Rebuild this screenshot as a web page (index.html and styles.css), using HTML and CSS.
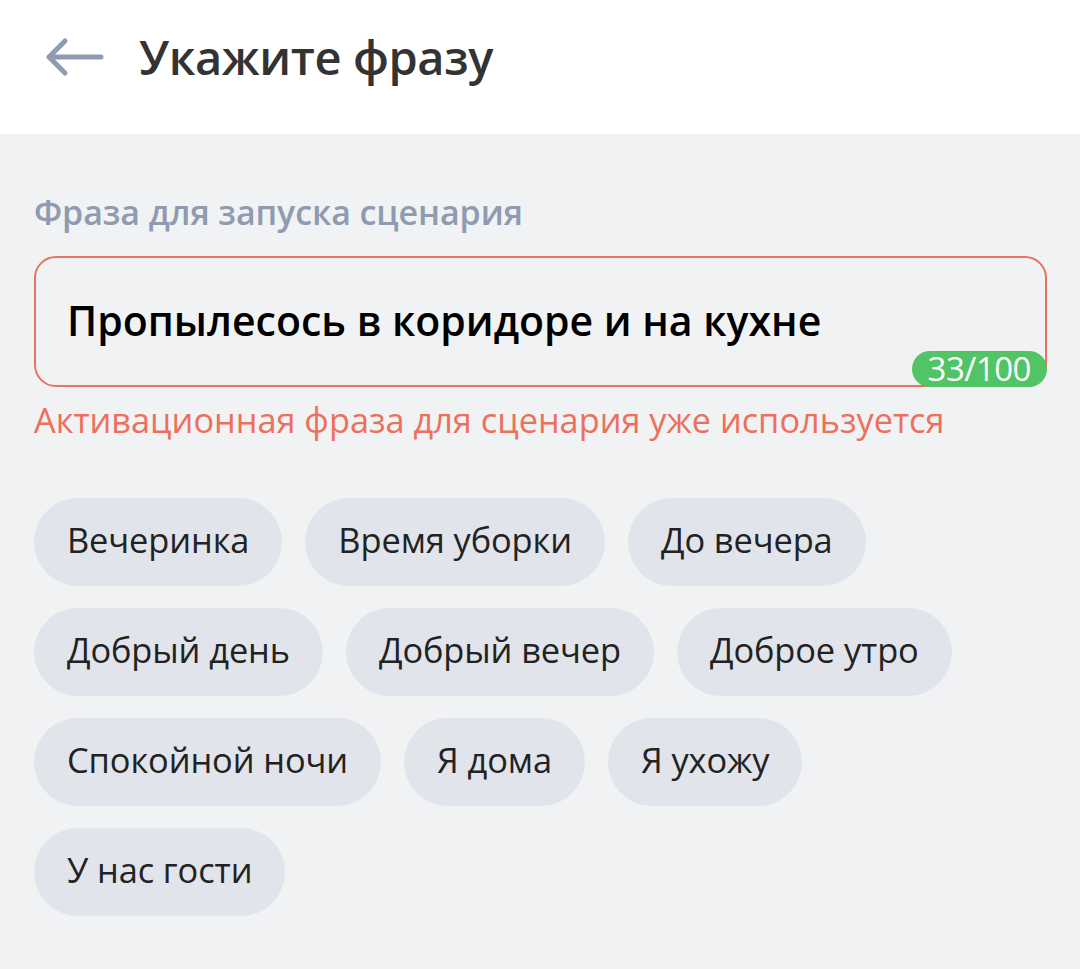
FILE: index.html
```html
<!DOCTYPE html>
<html lang="ru">
<head>
<meta charset="utf-8">
<link rel="stylesheet" href="styles.css">
</head>
<body>
<header class="header">
  <svg class="back" width="60" height="42" viewBox="0 0 60 42">
    <path d="M4 21H56M20 5L4 21L20 37" fill="none" stroke="#8e9bb0" stroke-width="5" stroke-linecap="round" stroke-linejoin="round"/>
  </svg>
  <h1 class="title">Укажите фразу</h1>
</header>
<main class="content">
  <div class="label">Фраза для запуска сценария</div>
  <div class="field">
    <div class="field-text">Пропылесось в коридоре и на кухне</div>
    <span class="counter">33/100</span>
  </div>
  <div class="error">Активационная фраза для сценария уже используется</div>
  <div class="chips">
    <span class="chip">Вечеринка</span>
    <span class="chip">Время уборки</span>
    <span class="chip">До вечера</span>
    <span class="chip">Добрый день</span>
    <span class="chip">Добрый вечер</span>
    <span class="chip">Доброе утро</span>
    <span class="chip">Спокойной ночи</span>
    <span class="chip">Я дома</span>
    <span class="chip">Я ухожу</span>
    <span class="chip">У нас гости</span>
  </div>
</main>
</body>
</html>
```
FILE: styles.css
```css
html, body {
  margin: 0;
  padding: 0;
  height: 100%;
}
body {
  background: #f1f2f3;
  font-family: "Open Sans", "Noto Sans", sans-serif;
  color: #222;
}
.header {
  background: #fff;
  height: 134px;
  display: flex;
  align-items: center;
  padding-left: 45px;
  box-sizing: border-box;
}
.back {
  display: block;
  margin-top: -20px;
}
.title {
  margin: -20px 0 0 34px;
  font-size: 47px;
  font-weight: 600;
  color: #333;
  letter-spacing: -0.4px;
}
.content {
  padding: 0 33px 0 34px;
}
.label {
  margin-top: 57px;
  font-size: 34px;
  font-weight: 600;
  color: #8e9bb0;
  line-height: 42px;
  letter-spacing: -0.1px;
}
.field {
  position: relative;
  margin-top: 23px;
  height: 131px;
  box-sizing: border-box;
  border: 2px solid #e8735f;
  border-radius: 22px;
  padding: 0 31px;
  display: flex;
  align-items: center;
}
.field-text {
  font-size: 41px;
  font-weight: 600;
  color: #000;
  margin-top: -4px;
}
.counter {
  position: absolute;
  right: -2px;
  bottom: -2px;
  background: #51c466;
  color: #fff;
  font-size: 33px;
  line-height: 36px;
  height: 36px;
  padding: 0 16px;
  border-radius: 18px;
  letter-spacing: -0.5px;
}
.error {
  margin-top: 10px;
  font-size: 34.3px;
  color: #ec705c;
  line-height: 46px;
}
.chips {
  margin-top: 55px;
  display: flex;
  flex-wrap: wrap;
  gap: 22px 23px;
  padding-right: 80px;
}
.chip {
  background: #e1e4ea;
  height: 88px;
  border-radius: 44px;
  padding: 0 33px 5px;
  display: flex;
  align-items: center;
  font-size: 34.4px;
  color: #222;
  box-sizing: border-box;
  letter-spacing: -0.1px;
}
```
